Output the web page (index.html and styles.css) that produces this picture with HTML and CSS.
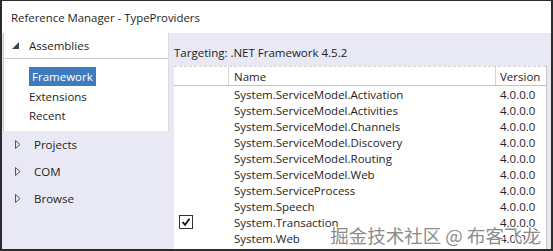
FILE: index.html
```html
<!DOCTYPE html>
<html lang="en">
<head>
    <meta charset="UTF-8">
    <title>Reference Manager - TypeProviders</title>
    <link rel="stylesheet" href="styles.css">
</head>
<body>

<div class="window">
    <div class="title">Reference Manager - TypeProviders</div>

    <div class="main">
        <!-- Left navigation -->
        <div class="nav">
            <div class="group">
                <div class="group-head">
                    <svg class="arrow" width="7" height="7" viewBox="0 0 7 7"><path d="M7 0 L7 7 L0 7 Z" fill="#444"/></svg>
                    Assemblies
                </div>
                <div class="group-items">
                    <div class="item"><span class="selected">Framework</span></div>
                    <div class="item">Extensions</div>
                    <div class="item">Recent</div>
                </div>
            </div>
            <div class="node">
                <svg class="arrow" width="6" height="9" viewBox="0 0 6 9"><path d="M0.5 0.5 L5 4.5 L0.5 8.5 Z" fill="none" stroke="#555"/></svg>
                Projects
            </div>
            <div class="node">
                <svg class="arrow" width="6" height="9" viewBox="0 0 6 9"><path d="M0.5 0.5 L5 4.5 L0.5 8.5 Z" fill="none" stroke="#555"/></svg>
                COM
            </div>
            <div class="node">
                <svg class="arrow" width="6" height="9" viewBox="0 0 6 9"><path d="M0.5 0.5 L5 4.5 L0.5 8.5 Z" fill="none" stroke="#555"/></svg>
                Browse
            </div>
        </div>

        <!-- Assembly list -->
        <div class="content">
            <div class="targeting">Targeting: .NET Framework 4.5.2</div>
            <div class="list">
                <div class="row head">
                    <div class="c-check"></div>
                    <div class="c-name">Name</div>
                    <div class="c-version">Version</div>
                </div>
                <div class="row"><div class="c-check"></div><div class="c-name">System.ServiceModel.Activation</div><div class="c-version">4.0.0.0</div></div>
                <div class="row"><div class="c-check"></div><div class="c-name">System.ServiceModel.Activities</div><div class="c-version">4.0.0.0</div></div>
                <div class="row"><div class="c-check"></div><div class="c-name">System.ServiceModel.Channels</div><div class="c-version">4.0.0.0</div></div>
                <div class="row"><div class="c-check"></div><div class="c-name">System.ServiceModel.Discovery</div><div class="c-version">4.0.0.0</div></div>
                <div class="row"><div class="c-check"></div><div class="c-name">System.ServiceModel.Routing</div><div class="c-version">4.0.0.0</div></div>
                <div class="row"><div class="c-check"></div><div class="c-name">System.ServiceModel.Web</div><div class="c-version">4.0.0.0</div></div>
                <div class="row"><div class="c-check"></div><div class="c-name">System.ServiceProcess</div><div class="c-version">4.0.0.0</div></div>
                <div class="row"><div class="c-check"></div><div class="c-name">System.Speech</div><div class="c-version">4.0.0.0</div></div>
                <div class="row">
                    <div class="c-check">
                        <svg class="checkbox" width="14" height="14" viewBox="0 0 14 14"><rect x="0.5" y="0.5" width="13" height="13" fill="#fff" stroke="#333"/><path d="M3.5 7 L6 9.8 L10.5 3.8" fill="none" stroke="#111" stroke-width="1.8"/></svg>
                    </div>
                    <div class="c-name">System.Transaction</div><div class="c-version">4.0.0.0</div>
                </div>
                <div class="row"><div class="c-check"></div><div class="c-name">System.Web</div><div class="c-version">4.0.0.0</div></div>
            </div>
        </div>
    </div>

    <div class="watermark">掘金技术社区 @ 布客飞龙</div>
</div>

</body>
</html>
```

FILE: styles.css
```css
body {
    margin: 0;
    font-family: "Open Sans", "Noto Sans", sans-serif;
    font-size: 11.5px;
    color: #1e1e1e;
}
.window {
    position: relative;
    width: 553px;
    height: 251px;
    box-sizing: border-box;
    border: 2px solid #2b2b2b;
    border-top-width: 1px;
    background-color: #ffffff;
    display: flex;
    flex-direction: column;
    overflow: hidden;
}
.title {
    height: 32px;
    flex: none;
    display: flex;
    align-items: center;
    padding-left: 9px;
    font-size: 11.4px;
    color: #1e1e1e;
}
.main {
    flex: 1;
    display: flex;
    min-height: 0;
}

/* Left navigation */
.nav {
    width: 166px;
    flex: none;
    background-color: #e8e9f4;
    padding-left: 1px;
}
.group {
    background-color: #ffffff;
    border-left: 1px solid #c8c8c8;
    border-right: 1px solid #dcdcdc;
    height: 98px;
    box-sizing: border-box;
}
.group-head {
    height: 26px;
    box-sizing: border-box;
    border-bottom: 1px solid #c8c8c8;
    display: flex;
    align-items: center;
    padding-left: 8px;
    gap: 10px;
}
.group-items {
    padding-top: 8px;
}
.item {
    height: 19.5px;
    display: flex;
    align-items: center;
    padding-left: 25px;
}
.item span {
    padding: 2px 3px;
}
.selected {
    background-color: #3f7cbf;
    color: #ffffff;
}
.node {
    height: 27px;
    display: flex;
    align-items: center;
    padding-left: 12px;
    gap: 13px;
}
.arrow {
    flex: none;
}

/* Right content */
.content {
    flex: 1;
    display: flex;
    flex-direction: column;
    background-color: #e8e9f4;
    min-width: 0;
}
.targeting {
    height: 33px;
    flex: none;
    box-sizing: border-box;
    padding: 12px 0 0 5px;
}
.list {
    flex: 1;
    background-color: #ffffff;
    margin-left: 5px;
    margin-right: 4px;
    border-right: 1px solid #c8c8c8;
}
.row {
    display: flex;
    height: 16px;
    align-items: center;
}
.row.head {
    height: 20px;
    box-sizing: border-box;
    border-top: 1px dashed #d4d4d4;
    border-bottom: 1px solid #c4c4c4;
}
.c-check {
    width: 55px;
    flex: none;
    height: 100%;
    box-sizing: border-box;
    display: flex;
    align-items: center;
    padding-left: 5px;
}
.c-name {
    width: 267px;
    flex: none;
    padding-left: 5px;
    box-sizing: border-box;
    white-space: nowrap;
}
.c-version {
    flex: 1;
    padding-left: 4px;
}
.head .c-check,
.head .c-name {
    border-right: 1px solid #d4d4d4;
    height: 100%;
    display: flex;
    align-items: center;
}

/* Watermark over the list */
.watermark {
    position: absolute;
    right: 10px;
    bottom: 1px;
    font-family: "Noto Sans CJK SC", sans-serif;
    font-size: 18.5px;
    color: #8c8c8c;
    text-shadow: -1px -1px 0 #fff, 1px -1px 0 #fff, -1px 1px 0 #fff, 1px 1px 0 #fff;
}
```
